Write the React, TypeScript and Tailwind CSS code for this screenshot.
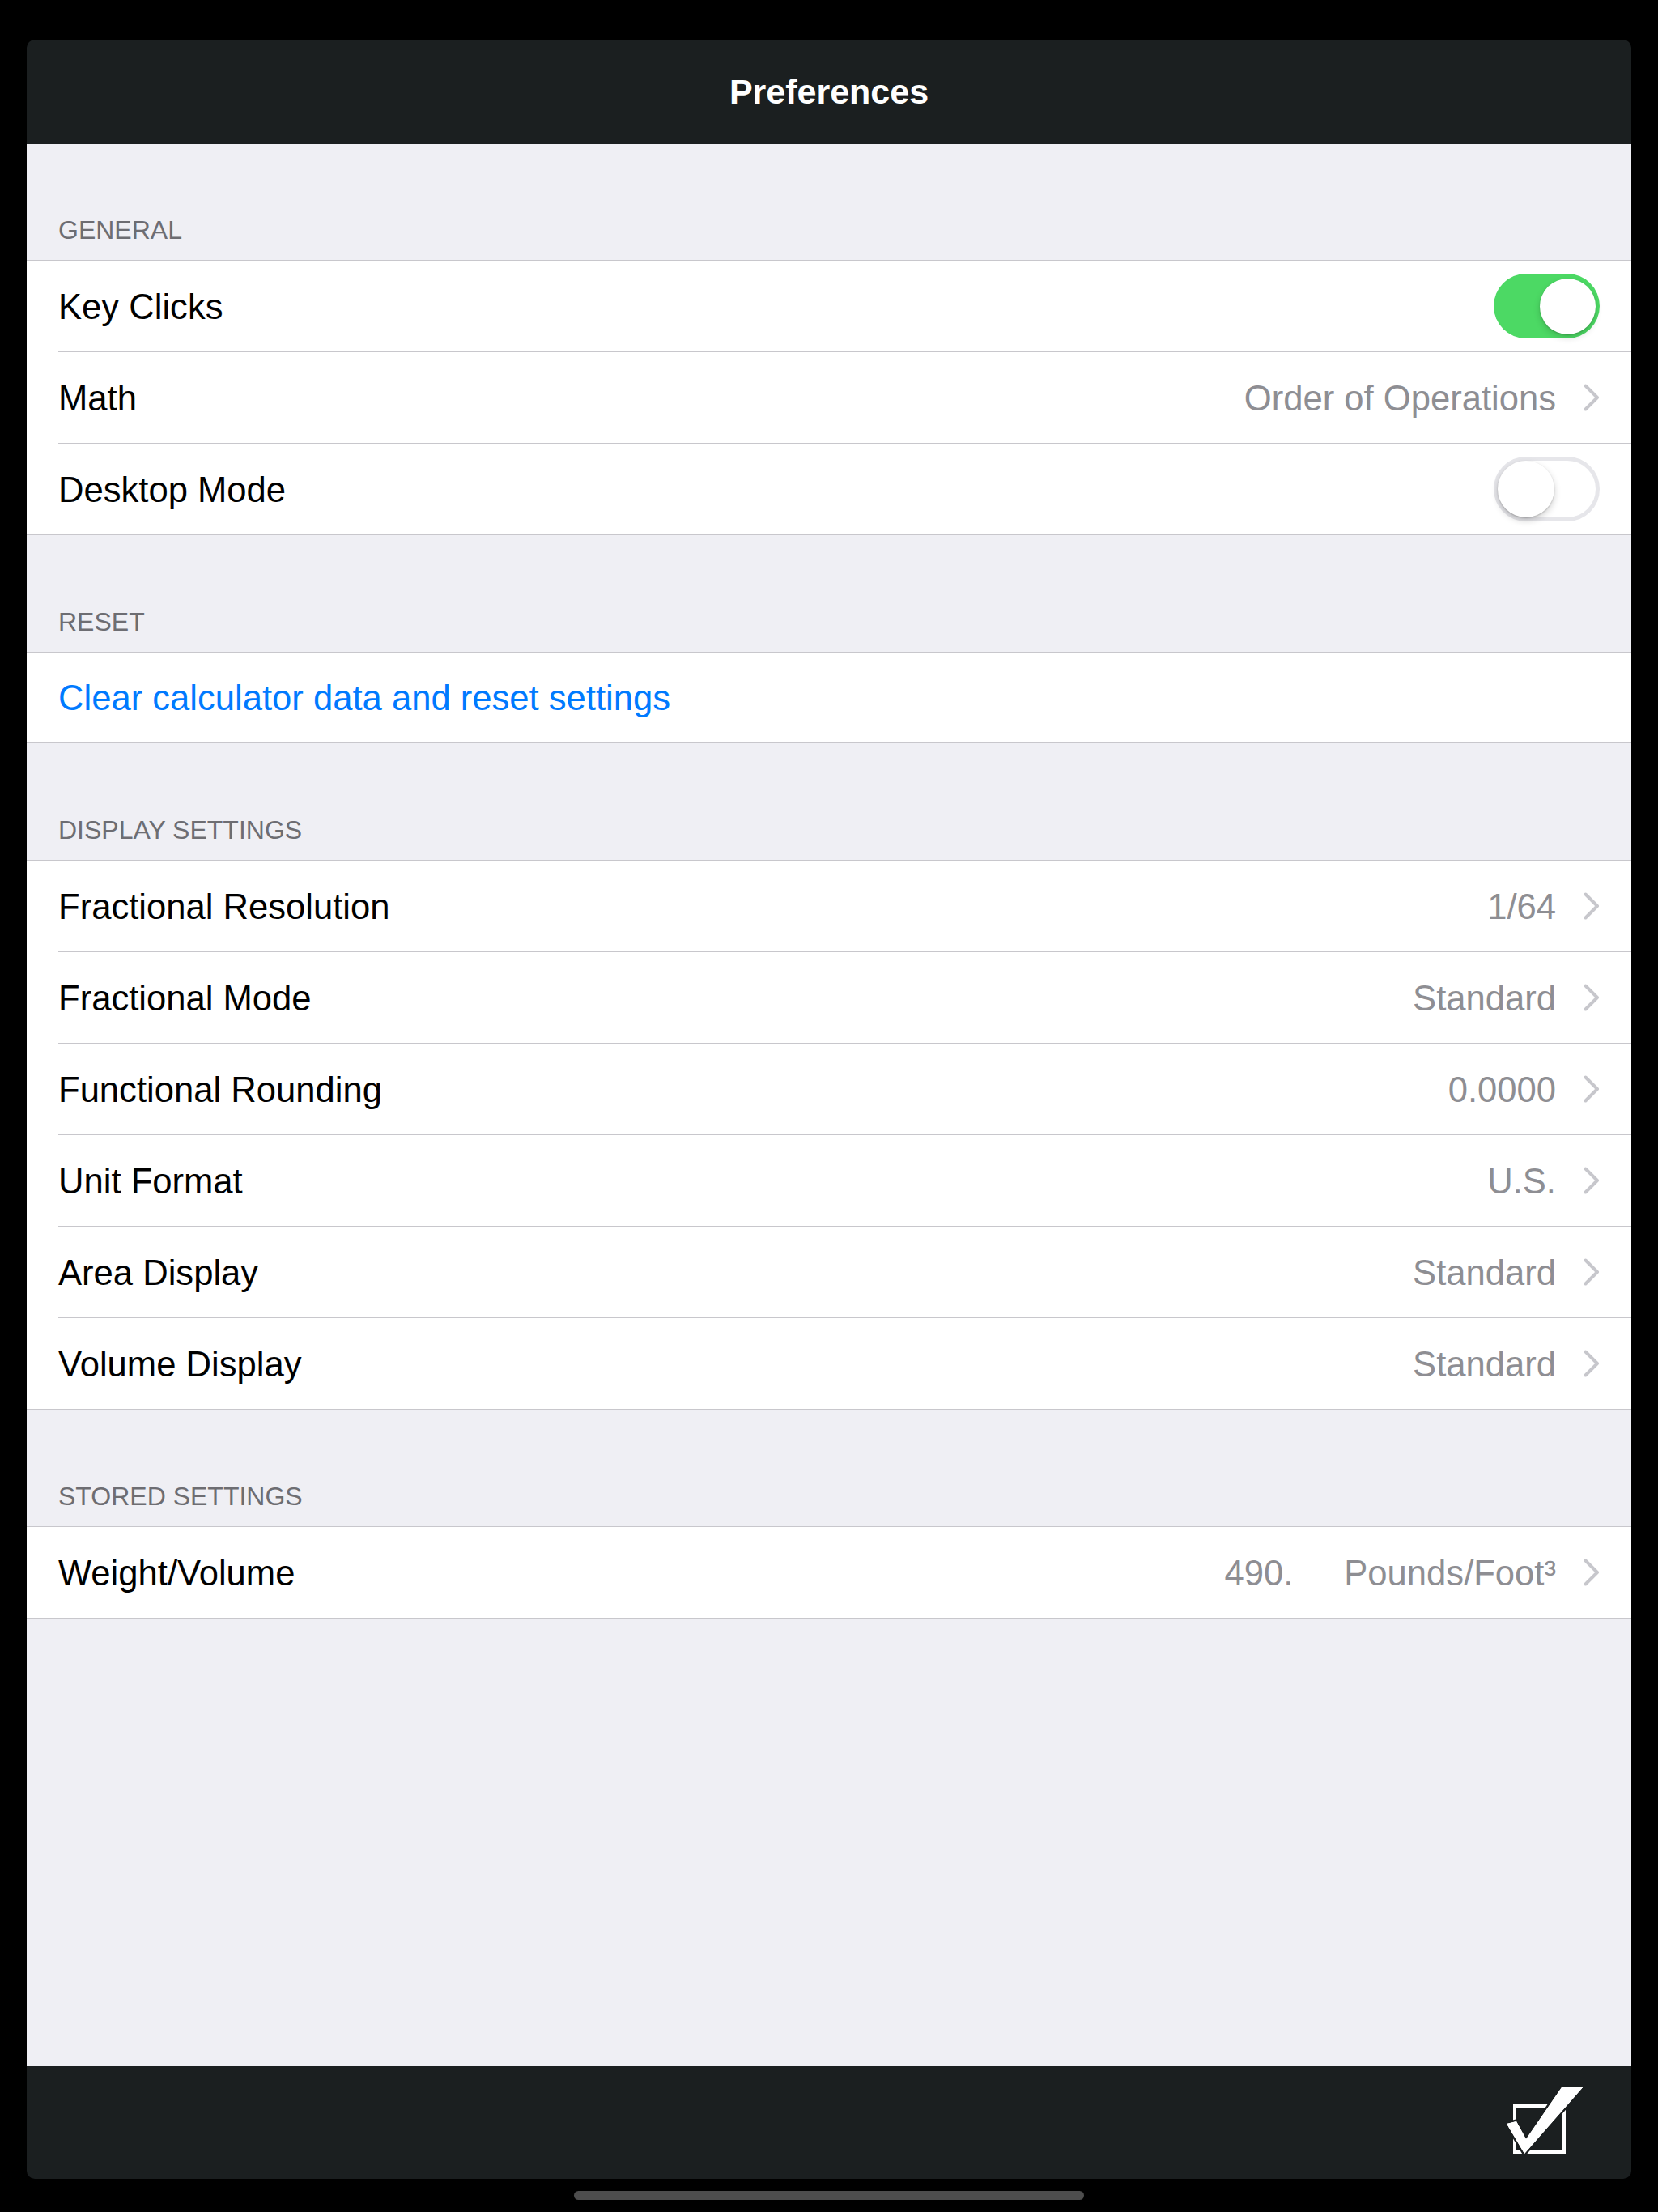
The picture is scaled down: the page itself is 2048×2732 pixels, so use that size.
import React from "react";

type RowProps = {
  label: string;
  value?: React.ReactNode;
  toggle?: boolean | null;
  chevron?: boolean;
  last?: boolean;
};

function Chevron() {
  return (
    <svg width="20" height="34" viewBox="0 0 20 34" className="shrink-0">
      <polyline
        points="2.5,2.5 17,17 2.5,31.5"
        fill="none"
        stroke="#c7c7cc"
        strokeWidth="4"
        strokeLinecap="round"
        strokeLinejoin="round"
      />
    </svg>
  );
}

function Toggle({ on }: { on: boolean }) {
  if (on) {
    return (
      <div className="w-[131px] h-[80px] rounded-full bg-[#4cd964] flex items-center justify-end pr-[5px] shrink-0">
        <div className="w-[69px] h-[69px] rounded-full bg-white shadow-[0_4px_9px_rgba(0,0,0,0.16),0_1px_2px_rgba(0,0,0,0.18)]" />
      </div>
    );
  }
  return (
    <div className="w-[131px] h-[80px] rounded-full bg-white border-[5px] border-[#e6e6ea] flex items-center justify-start shrink-0">
      <div className="w-[70px] h-[70px] rounded-full bg-white shadow-[0_4px_9px_rgba(0,0,0,0.18),0_1px_2px_rgba(0,0,0,0.2)]" />
    </div>
  );
}

function Row({ label, value, toggle = null, chevron = true, last = false }: RowProps) {
  return (
    <div className="pl-[39px] bg-white">
      <div
        className={
          "flex items-center pr-[39px] " +
          (last ? "h-[112px]" : "h-[113px] border-b border-[#c8c7cc]")
        }
      >
        <span className="text-[43.6px] text-black leading-none pt-[3px]">{label}</span>
        <div className="flex-1" />
        {value !== undefined && (
          <span className="text-[43.6px] text-[#8e8e93] leading-none pt-[3px] mr-[34px]">{value}</span>
        )}
        {toggle !== null ? <Toggle on={toggle} /> : chevron ? <Chevron /> : null}
      </div>
    </div>
  );
}

function SectionHeader({ title, first = false }: { title: string; first?: boolean }) {
  return (
    <div
      className={
        "flex items-end pl-[39px] pb-[18px] " + (first ? "h-[143px]" : "h-[144px]")
      }
    >
      <span className="text-[32px] leading-[38px] text-[#6d6d72] uppercase">{title}</span>
    </div>
  );
}

function Group({ children }: { children: React.ReactNode }) {
  return <div className="bg-white border-y border-[#c8c7cc]">{children}</div>;
}

function DoneIcon() {
  return (
    <svg width="140" height="120" viewBox="0 0 140 120">
      <rect x="31" y="41" width="61" height="57" fill="none" stroke="#ffffff" strokeWidth="4" />
      <polygon
        points="21,63 33,60 45,82 89,18 116,17 43,100"
        fill="#ffffff"
        stroke="#1b1f20"
        strokeWidth="5"
        strokeLinejoin="miter"
        paintOrder="stroke"
      />
      <polygon points="21,63 33,60 45,82 89,18 116,17 43,100" fill="#ffffff" />
    </svg>
  );
}

export default function App() {
  return (
    <div className="w-[2048px] h-[2732px] bg-black font-['Liberation_Sans',Arial,sans-serif] flex flex-col items-center pt-[49px]">
      <div className="w-[1982px] h-[2642px] rounded-[10px] overflow-hidden flex flex-col">
        <header className="h-[129px] bg-[#1b1f20] flex items-center justify-center">
          <h1 className="text-[43px] font-bold text-white leading-none">Preferences</h1>
        </header>

        <main className="flex-1 bg-[#efeff4]">
          <SectionHeader title="General" first />
          <Group>
            <Row label="Key Clicks" toggle={true} />
            <Row label="Math" value="Order of Operations" />
            <Row label="Desktop Mode" toggle={false} last />
          </Group>

          <SectionHeader title="Reset" />
          <Group>
            <div className="h-[111px] pl-[39px] flex items-center">
              <span className="text-[43.6px] text-[#007aff] leading-none pt-[3px]">
                Clear calculator data and reset settings
              </span>
            </div>
          </Group>

          <SectionHeader title="Display Settings" />
          <Group>
            <Row label="Fractional Resolution" value="1/64" />
            <Row label="Fractional Mode" value="Standard" />
            <Row label="Functional Rounding" value="0.0000" />
            <Row label="Unit Format" value="U.S." />
            <Row label="Area Display" value="Standard" />
            <Row label="Volume Display" value="Standard" last />
          </Group>

          <SectionHeader title="Stored Settings" />
          <Group>
            <Row
              label="Weight/Volume"
              value={
                <span className="flex items-center gap-[63px]">
                  <span>490.</span>
                  <span>Pounds/Foot³</span>
                </span>
              }
              last
            />
          </Group>
        </main>

        <footer className="h-[139px] bg-[#1b1f20] flex items-start justify-end pt-[8px] pr-[35px]">
          <DoneIcon />
        </footer>
      </div>
      <div className="mt-[15px] w-[630px] h-[11px] rounded-full bg-[#4d4d4d]" />
    </div>
  );
}
